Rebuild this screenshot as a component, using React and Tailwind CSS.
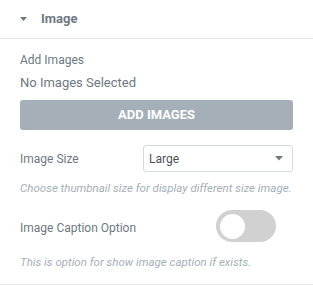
export default function App() {
  return (
    <div className="w-[313px] h-[287px] bg-white overflow-hidden text-[#6d7882]" style={{ fontFamily: "Roboto, 'Liberation Sans', sans-serif" }}>
      <div className="h-[39px] flex items-center pl-[20px] border-b border-[#e6e9ec]">
        <svg width="8" height="5" viewBox="0 0 8 5" className="mr-[13px]"><path d="M0 0h7l-3.5 4z" fill="#6d7882" /></svg>
        <span className="text-[13px] font-bold text-[#6d7882]">Image</span>
      </div>
      <div className="px-[20px]">
        <div className="pt-[14px] text-[12px] leading-[15px]">Add Images</div>
        <div className="mt-[7px] text-[13px] leading-[16px]">No Images Selected</div>
        <div className="mt-[9px] h-[30px] rounded-[3px] bg-[#a4afb7] flex items-center justify-center text-white text-[13px] font-bold uppercase">Add Images</div>
        <div className="mt-[15px] flex items-center">
          <div className="w-[123px] text-[12px]">Image Size</div>
          <div className="flex-1 h-[27px] border border-[#d5dadf] rounded-[3px] flex items-center justify-between pl-[5px] pr-[9px] text-[12px] text-[#495157]">
            <span>Large</span>
            <svg width="8" height="5" viewBox="0 0 8 5"><path d="M0 0h8l-4 4.5z" fill="#6d7882" /></svg>
          </div>
        </div>
        <div className="mt-[9px] text-[11.5px] italic text-[#a4afb7] leading-[14px] whitespace-nowrap">Choose thumbnail size for display different size image.</div>
        <div className="mt-[15px] flex items-center justify-between">
          <div className="text-[12px] pt-[4px]">Image Caption Option</div>
          <div className="w-[60px] h-[32px] rounded-full bg-[#d1d1d1] flex items-center pl-[4px] mr-[17px]">
            <div className="w-[25px] h-[25px] rounded-full bg-white" />
          </div>
        </div>
        <div className="mt-[13px] text-[11.5px] italic text-[#a4afb7] leading-[14px] whitespace-nowrap">This is option for show image caption if exists.</div>
      </div>
      <div className="mt-[15px] border-b border-[#e6e9ec]" />
    </div>
  );
}
